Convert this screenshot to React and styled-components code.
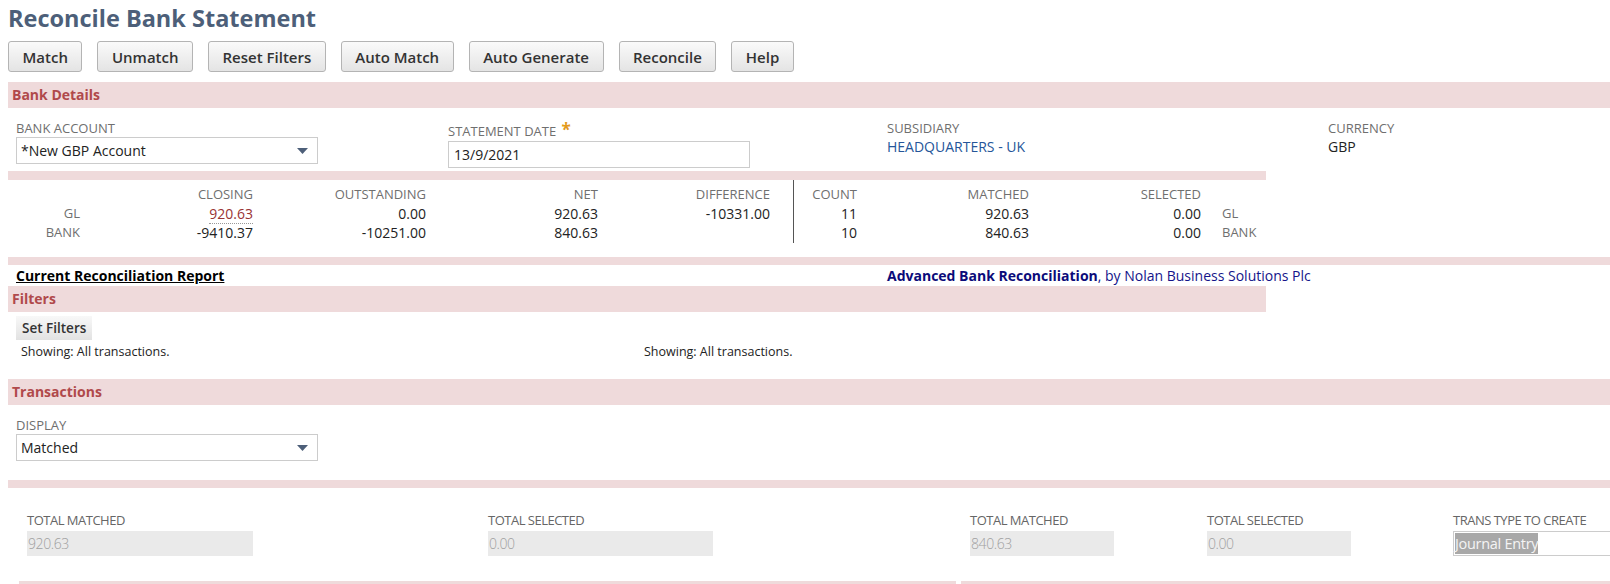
import React from 'react';
import styled, { createGlobalStyle } from 'styled-components';

const GlobalStyle = createGlobalStyle`
	html, body {
		margin: 0;
		padding: 0;
		background: #ffffff;
		overflow: hidden;
	}

	body {
		font-family: "Open Sans", "Liberation Sans", Arial, sans-serif;
		color: #333333;
	}
`;

const buttons = ['Match', 'Unmatch', 'Reset Filters', 'Auto Match', 'Auto Generate', 'Reconcile', 'Help'];

const stats = {
	left: [
		{ title: 'CLOSING', gl: '920.63', bank: '-9410.37' },
		{ title: 'OUTSTANDING', gl: '0.00', bank: '-10251.00' },
		{ title: 'NET', gl: '920.63', bank: '840.63' },
		{ title: 'DIFFERENCE', gl: '-10331.00', bank: '' }
	],
	right: [
		{ title: 'MATCHED', gl: '920.63', bank: '840.63' },
		{ title: 'SELECTED', gl: '0.00', bank: '0.00' }
	],
	counts: { gl: '11', bank: '10' }
};

const totals = [
	{ label: 'TOTAL MATCHED', value: '920.63', width: '226px' },
	{ label: 'TOTAL SELECTED', value: '0.00', width: '225px' },
	{ label: 'TOTAL MATCHED', value: '840.63', width: '144px' },
	{ label: 'TOTAL SELECTED', value: '0.00', width: '144px' }
];

const Arrow = () => (
	<svg width="11" height="6" viewBox="0 0 11 6">
		<path d="M0 0 L11 0 L5.5 6 Z" fill="#4d5f79" />
	</svg>
);

const StatRow = ({ label, field }) => (
	<>
		<RowLabel>{ label }</RowLabel>
		{ stats.left.map((col, i) => (
			<StatValue key={ col.title } flagged={ field === 'gl' && i === 0 }>
				{ field === 'gl' && i === 0 ? <Dotted>{ col[field] }</Dotted> : col[field] }
			</StatValue>
		)) }
		<span />
		<CountCell>{ stats.counts[field] }</CountCell>
		{ stats.right.map((col) => (
			<StatValue key={ col.title }>{ col[field] }</StatValue>
		)) }
		<SideLabel>{ label }</SideLabel>
	</>
);

const App = () => {
	return (
		<Page>
			<GlobalStyle />
			<Title>Reconcile Bank Statement</Title>

			<Toolbar>
				{ buttons.map((label) => (
					<Button key={ label }>{ label }</Button>
				)) }
			</Toolbar>

			<SectionHeader>Bank Details</SectionHeader>

			<FieldGrid>
				<Field>
					<Label>Bank Account</Label>
					<Select>
						<span>*New GBP Account</span>
						<Arrow />
					</Select>
				</Field>
				<Field>
					<Label tall>Statement Date <Required>*</Required></Label>
					<TextInput>13/9/2021</TextInput>
				</Field>
				<Field>
					<Label>Subsidiary</Label>
					<LinkValue>HEADQUARTERS - UK</LinkValue>
				</Field>
				<Field>
					<Label>Currency</Label>
					<Value>GBP</Value>
				</Field>
			</FieldGrid>

			<Bar short />

			<StatsGrid>
				<span />
				{ stats.left.map((col) => (
					<StatHead key={ col.title }>{ col.title }</StatHead>
				)) }
				<span />
				<CountCell head>COUNT</CountCell>
				{ stats.right.map((col) => (
					<StatHead key={ col.title }>{ col.title }</StatHead>
				)) }
				<span />

				<StatRow label="GL" field="gl" />
				<StatRow label="BANK" field="bank" />
			</StatsGrid>

			<Bar />

			<ReportRow>
				<ReportLink>Current Reconciliation Report</ReportLink>
				<Credit>
					<strong>Advanced Bank Reconciliation</strong>, by Nolan Business Solutions Plc
				</Credit>
			</ReportRow>

			<SectionHeader short>Filters</SectionHeader>

			<FilterBody>
				<SmallButton>Set Filters</SmallButton>
				<ShowingRow>
					<Showing>Showing: All transactions.</Showing>
					<Showing>Showing: All transactions.</Showing>
				</ShowingRow>
			</FilterBody>

			<SectionHeader>Transactions</SectionHeader>

			<DisplayField>
				<Label>Display</Label>
				<Select>
					<span>Matched</span>
					<Arrow />
				</Select>
			</DisplayField>

			<Bar />

			<TotalsGrid>
				{ totals.map((item, i) => (
					<Field key={ i }>
						<NarrowLabel>{ item.label }</NarrowLabel>
						<DisabledInput style={ { width: item.width } }>{ item.value }</DisabledInput>
					</Field>
				)) }
				<Field>
					<NarrowLabel>TRANS TYPE TO CREATE</NarrowLabel>
					<TypeInput>
						<Highlight>Journal Entry</Highlight>
					</TypeInput>
				</Field>
			</TotalsGrid>

			<BottomBars>
				<BottomBar wide />
				<BottomBar />
			</BottomBars>
		</Page>
	);
}

export default App;

const Page = styled.div`
	width: 1610px;
	padding-left: 8px;
	box-sizing: border-box;
`;

const Title = styled.h1`
	margin: 0;
	padding-top: 3px;
	font-size: 23.5px;
	line-height: 31px;
	font-weight: 700;
	color: #4d5f79;
`;

const Toolbar = styled.div`
	display: flex;
	gap: 15px;
	margin-top: 7px;
	margin-bottom: 10px;
`;

const Button = styled.button`
	height: 31px;
	padding: 0 13.5px;
	font-family: inherit;
	font-size: 15px;
	font-weight: 600;
	color: #333333;
	background: linear-gradient(#fafafa, #e4e4e4);
	border: 1px solid #b4b4b4;
	border-radius: 3px;
`;

const SectionHeader = styled.div`
	width: ${ ({ short }) => short ? '1258px' : 'auto' };
	height: 26px;
	line-height: 26px;
	padding-left: 4px;
	background: #efdadb;
	color: #b0494b;
	font-size: 14px;
	font-weight: 700;
	box-sizing: border-box;
`;

const FieldGrid = styled.div`
	display: grid;
	grid-template-columns: 432px 439px 441px 1fr;
	padding: 12px 0 3px 8px;
`;

const Field = styled.div`
	display: flex;
	flex-direction: column;
	align-items: flex-start;
`;

const Label = styled.div`
	font-size: 13px;
	line-height: ${ ({ tall }) => tall ? '20px' : '17px' };
	color: #6f6f6f;
	text-transform: uppercase;
`;

const Required = styled.span`
	color: #e39a1b;
	font-size: 17px;
	font-weight: 700;
	margin-left: 2px;
`;

const Select = styled.div`
	width: 302px;
	height: 27px;
	display: flex;
	align-items: center;
	justify-content: space-between;
	padding: 0 9px 0 4px;
	border: 1px solid #cccccc;
	box-sizing: border-box;
	font-size: 14px;
	color: #222222;
`;

const TextInput = styled.div`
	width: 302px;
	height: 27px;
	line-height: 25px;
	padding-left: 5px;
	border: 1px solid #cccccc;
	box-sizing: border-box;
	font-size: 14px;
	color: #222222;
`;

const LinkValue = styled.div`
	font-size: 14px;
	line-height: 19px;
	color: #255599;
`;

const Value = styled.div`
	font-size: 14px;
	line-height: 19px;
	color: #222222;
`;

const Bar = styled.div`
	width: ${ ({ short }) => short ? '1258px' : 'auto' };
	height: ${ ({ short }) => short ? '9px' : '8px' };
	background: #efdadb;
`;

const StatsGrid = styled.div`
	display: grid;
	grid-template-columns: 72px 173px 173px 172px 172px 23px 64px 172px 172px 1fr;
	grid-template-rows: 24px 19px 20px;
	margin-bottom: 14px;
	font-size: 14px;
	line-height: 19px;
`;

const StatHead = styled.div`
	align-self: end;
	text-align: right;
	font-size: 13px;
	color: #6f6f6f;
`;

const CountCell = styled.div`
	display: flex;
	align-items: ${ ({ head }) => head ? 'flex-end' : 'flex-start' };
	justify-content: flex-end;
	border-left: 1px solid #555555;
	font-size: ${ ({ head }) => head ? '13px' : '14px' };
	color: ${ ({ head }) => head ? '#6f6f6f' : '#222222' };
`;

const RowLabel = styled.div`
	text-align: right;
	font-size: 13px;
	color: #6f6f6f;
`;

const SideLabel = styled.div`
	padding-left: 21px;
	font-size: 13px;
	color: #6f6f6f;
`;

const StatValue = styled.div`
	text-align: right;
	color: ${ ({ flagged }) => flagged ? '#993333' : '#222222' };
`;

const Dotted = styled.span`
	border-bottom: 1px dotted #999999;
`;

const ReportRow = styled.div`
	display: flex;
	height: 21px;
	align-items: center;
	padding-left: 8px;
	font-size: 14px;
`;

const ReportLink = styled.a`
	width: 871px;
	font-weight: 700;
	color: #000000;
	text-decoration: underline;
`;

const Credit = styled.div`
	font-size: 14px;
	color: #14148a;

	strong {
		color: #0b0b7a;
	}
`;

const FilterBody = styled.div`
	padding: 4px 0 19px 8px;
`;

const SmallButton = styled.div`
	display: inline-block;
	height: 24px;
	line-height: 24px;
	padding: 0 6px;
	font-size: 13.5px;
	font-weight: 600;
	color: #333333;
	background: linear-gradient(#f8f8f8, #e2e2e2);
`;

const ShowingRow = styled.div`
	display: flex;
	margin-top: 4px;
	padding-left: 5px;
`;

const Showing = styled.div`
	width: 623px;
	font-size: 12.5px;
	line-height: 16px;
	color: #222222;
`;

const DisplayField = styled.div`
	padding: 12px 0 19px 8px;
`;

const TotalsGrid = styled.div`
	display: grid;
	grid-template-columns: 461px 482px 237px 246px 1fr;
	padding: 24px 0 25px 19px;
`;

const NarrowLabel = styled.div`
	font-size: 13px;
	line-height: 17px;
	letter-spacing: -0.5px;
	color: #666666;
	margin-bottom: 2px;
`;

const DisabledInput = styled.div`
	height: 25px;
	line-height: 25px;
	padding-left: 1px;
	background: #eaeaea;
	font-size: 14px;
	font-weight: 300;
	letter-spacing: -0.4px;
	color: #a0a0a0;
	box-sizing: border-box;
`;

const TypeInput = styled.div`
	width: 200px;
	height: 25px;
	display: flex;
	align-items: center;
	padding-left: 1px;
	border: 1px solid #cccccc;
	box-sizing: border-box;
`;

const Highlight = styled.span`
	background: #a8a8a8;
	color: #f4f4f4;
	font-size: 14.5px;
	letter-spacing: -0.3px;
	line-height: 21px;
`;

const BottomBars = styled.div`
	display: flex;
	gap: 5px;
	padding-left: 11px;
`;

const BottomBar = styled.div`
	width: ${ ({ wide }) => wide ? '937px' : 'auto' };
	flex: ${ ({ wide }) => wide ? 'none' : '1' };
	height: 8px;
	background: #efdadb;
`;
